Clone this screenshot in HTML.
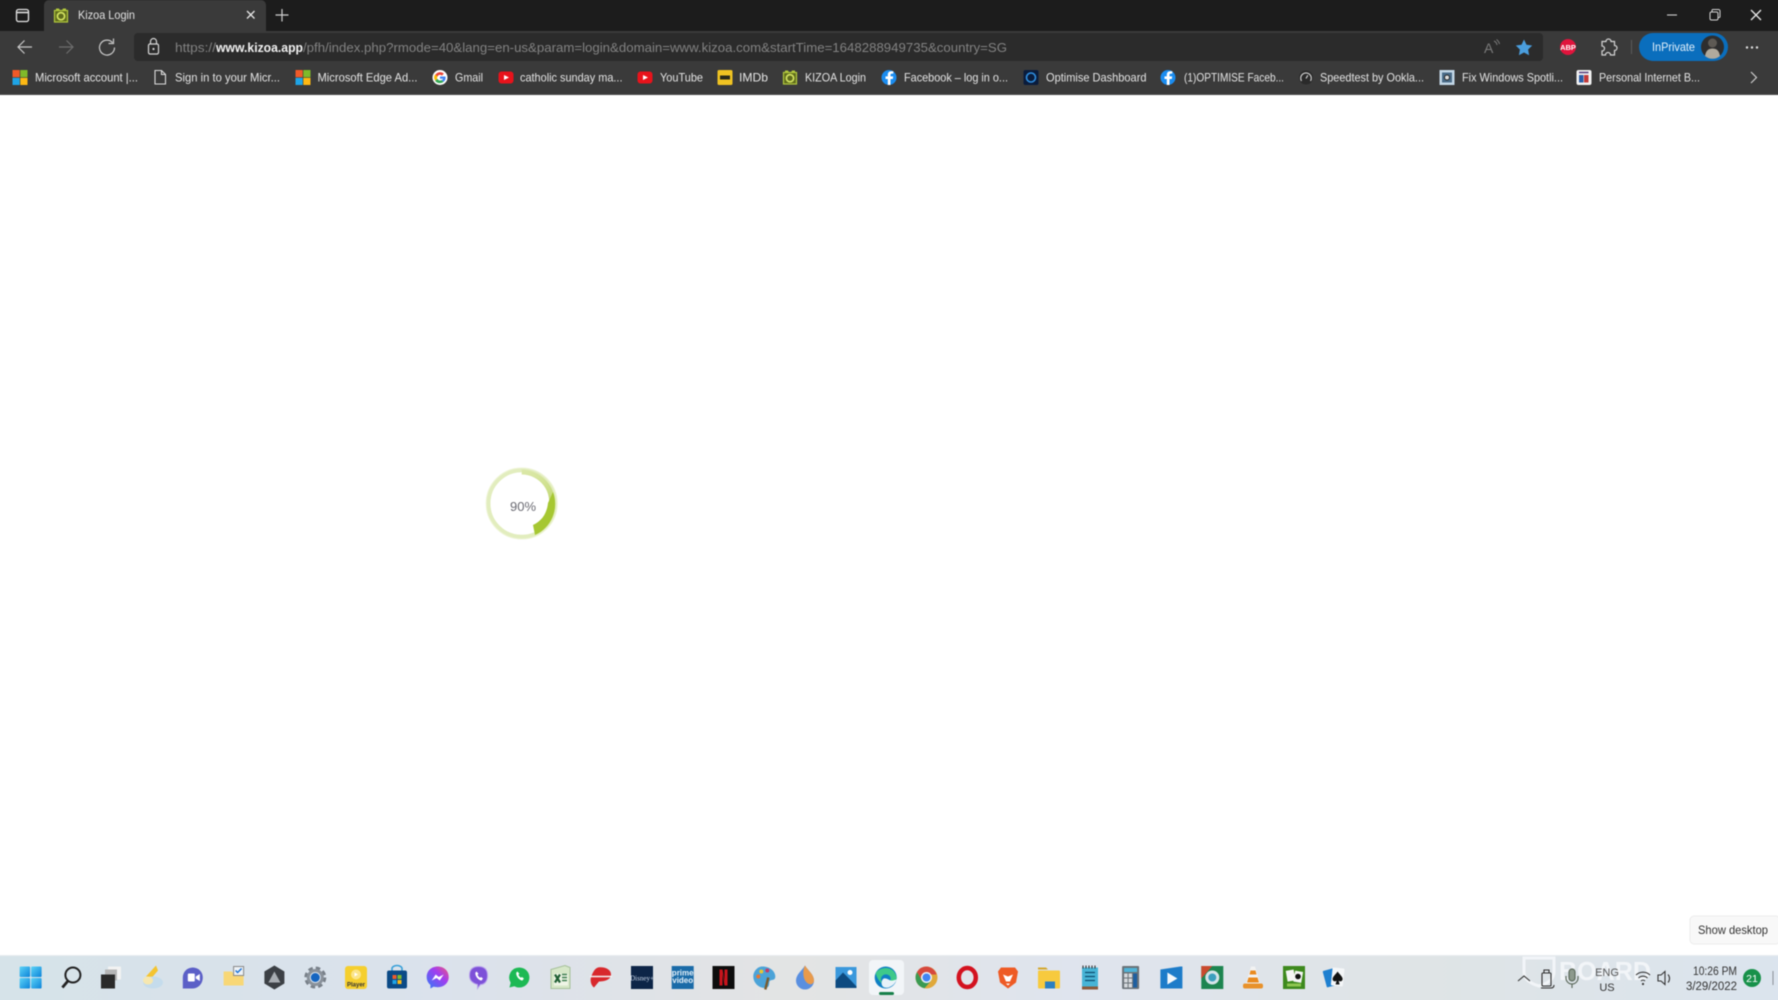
<!DOCTYPE html>
<html><head><meta charset="utf-8"><title>Kizoa Login</title>
<style>
html,body{margin:0;padding:0;background:#fff;width:1778px;height:1000px;overflow:hidden}
#w{position:relative;width:1778px;height:1000px;overflow:hidden;contain:paint}
svg{display:block;position:absolute;left:-6px;top:-6px;font-family:"Liberation Sans",sans-serif;filter:blur(.45px)}
</style></head><body><div id="w">
<svg width="1790" height="1012" viewBox="-6 -6 1790 1012" xmlns="http://www.w3.org/2000/svg">
<defs>
<linearGradient id="tb" x1="0" x2="1" y1="0" y2="0">
<stop offset="0" stop-color="#d6e3e9"/><stop offset=".25" stop-color="#dbe2ec"/><stop offset=".45" stop-color="#e3e4e4"/><stop offset=".6" stop-color="#dfe4ee"/><stop offset=".8" stop-color="#dfe4e6"/><stop offset="1" stop-color="#dbe4ee"/>
</linearGradient>
<linearGradient id="ms" x1="0" x2="1" y1="0" y2="1"><stop offset="0" stop-color="#5cd3f7"/><stop offset="1" stop-color="#0b83d9"/></linearGradient>
<linearGradient id="arc" x1="0" x2="0" y1="0" y2="1"><stop offset="0" stop-color="#dbe8a8"/><stop offset="1" stop-color="#a2c42c"/></linearGradient>
<linearGradient id="msg" x1="0" x2="1" y1="1" y2="0"><stop offset="0" stop-color="#2f7bf6"/><stop offset=".6" stop-color="#a13df0"/><stop offset="1" stop-color="#f0567a"/></linearGradient>
<g id="msl"><rect x="-7.5" y="-7.5" width="7.2" height="7.2" fill="#ef5a29"/><rect x=".3" y="-7.5" width="7.2" height="7.2" fill="#7fba2a"/><rect x="-7.5" y=".3" width="7.2" height="7.2" fill="#1fa4e6"/><rect x=".3" y=".3" width="7.2" height="7.2" fill="#fdb813"/></g>
<g id="yt"><rect x="-7.5" y="-6" width="15" height="12" rx="3" fill="#e8131b"/><path d="M-2-2.5 3 0-2 2.5z" fill="#fff"/></g>
<g id="fb"><circle r="7.5" fill="#1a8cf0"/><path d="M1.5 7.5V1.5h2.3l.4-2.6H1.5v-1.5c0-.8.3-1.3 1.4-1.3h1.4v-2.3C3.9-6.2 3.2-6.3 2.4-6.3-.1-6.300-1.2-4.900-1.200-2.800V-1.100H-3.500V1.500h2.300v6z" fill="#fff"/></g>
<g id="kz"><path d="M-6.500-5h13v11.500h-13z" fill="#5f6c1c"/><path d="M-5-7h3l1 2h-4zM2-7h3v2H1z" fill="#b2c93d"/><circle r="3.600" cy=".7" fill="none" stroke="#d2e260" stroke-width="1.700"/><rect x="-6.500" y="-5" width="13" height="11.500" fill="none" stroke="#b2c93d" stroke-width="1.200"/></g>
</defs>

<!-- page -->
<rect x="-6" y="-6" width="1790" height="1012" fill="#fff"/>

<!-- browser chrome -->
<rect x="-6" y="-6" width="1790" height="37" fill="#1c1c1c"/>
<rect x="-6" y="31" width="1790" height="63.500" fill="#3a3a3a"/>
<rect x="-6" y="94" width="1790" height="1" fill="#4a4a4a"/>
<path d="M44 31V5a5 5 0 0 1 5-5H261a5 5 0 0 1 5 5V31z" fill="#3a3a3a"/>
<rect x="134" y="33" width="1409" height="28" rx="4" fill="#2b2b2b"/>

<!-- tab bar -->
<rect x="16.500" y="9.500" width="12" height="12" rx="2" fill="none" stroke="#e6e6e6" stroke-width="1.300"/><path d="M17 12.500h11" stroke="#e6e6e6" stroke-width="1.500"/>
<use href="#kz" x="61" y="15.500"/>
<text x="78" y="19" font-size="12" fill="#e2e2e2" textLength="57" lengthAdjust="spacingAndGlyphs">Kizoa Login</text>
<path d="M247 11l7.500 7.500M254.500 11l-7.500 7.500" stroke="#e6e6e6" stroke-width="1.300"/>
<path d="M282 9v12.500M275.500 15h13" stroke="#cfcfcf" stroke-width="1.200"/>
<path d="M1667 15h10" stroke="#cfcfcf" stroke-width="1.100"/>
<rect x="1710" y="12" width="8" height="8" rx="1.500" fill="none" stroke="#d5d5d5" stroke-width="1"/><path d="M1712 12v-1.500a1 1 0 0 1 1-1h5.500a1.500 1.500 0 0 1 1.500 1.500v5.500a1 1 0 0 1-1 1h-1.500" fill="none" stroke="#d5d5d5"/>
<path d="M1751 10l10 10M1761 10l-10 10" stroke="#e6e6e6" stroke-width="1.300"/>

<!-- toolbar -->
<path d="M32 47H18M24.500 40.500 18 47l6.500 6.500" fill="none" stroke="#c8c8c8" stroke-width="1.200"/>
<path d="M59 47h14M66.500 40.500 73 47l-6.500 6.500" fill="none" stroke="#6d6d6d" stroke-width="1.200"/>
<path d="M112.500 42.500a7.500 7.500 0 1 0 2 5M113.500 38.500v5h-5" fill="none" stroke="#c8c8c8" stroke-width="1.200"/>
<rect x="148.500" y="44" width="10" height="10" rx="1.500" fill="none" stroke="#d8d8d8" stroke-width="1.200"/><path d="M150.500 44v-2.500a3 3 0 0 1 6 0V44" fill="none" stroke="#d8d8d8" stroke-width="1.200"/><circle cx="153.500" cy="49" r="1.100" fill="#d8d8d8"/>
<text y="52" font-size="13" fill="#828282" x="175" textLength="41" lengthAdjust="spacingAndGlyphs">https://</text>
<text y="52" font-size="13" fill="#f2f2f2" font-weight="bold" x="216" textLength="87" lengthAdjust="spacingAndGlyphs">www.kizoa.app</text>
<text y="52" font-size="13" fill="#828282" x="303" textLength="704" lengthAdjust="spacingAndGlyphs">/pfh/index.php?rmode=40&amp;lang=en-us&amp;param=login&amp;domain=www.kizoa.com&amp;startTime=1648288949735&amp;country=SG</text>
<text x="1484" y="53" font-size="14" fill="#7c7c7c">A</text><path d="M1494 41a5 5 0 0 1 3 4M1496.500 39.500a8 8 0 0 1 3 4.500" fill="none" stroke="#7c7c7c"/>
<path d="M1524 39.500l2.500 5.200 5.700.8-4.100 4 1 5.700-5.100-2.700-5.100 2.700 1-5.700-4.100-4 5.700-.8z" fill="#4a9ede"/>
<circle cx="1568" cy="47" r="8" fill="#e0143c"/><text x="1568" y="50" font-size="7.500" font-weight="bold" fill="#fff" text-anchor="middle">ABP</text>
<path d="M1606 41.500a2.500 2.500 0 0 1 5 0h3.500v4a2.500 2.500 0 0 1 0 5v4.500h-4a2.500 2.500 0 0 0-5 0h-3.500v-4a2.500 2.500 0 0 0 0-5v-4.500z" fill="none" stroke="#d4d4d4" stroke-width="1.200"/>
<path d="M1631.500 40v14" stroke="#5a5a5a"/>
<rect x="1639" y="33" width="89" height="28" rx="14" fill="#0a6ebd"/>
<text x="1652" y="51" font-size="12" fill="#e4f1fb" textLength="43" lengthAdjust="spacingAndGlyphs">InPrivate</text>
<circle cx="1712.500" cy="47" r="11.500" fill="#2e2e2e"/><circle cx="1712.500" cy="43" r="4.500" fill="#5e5a54"/><path d="M1705 56c1-6 4-7.500 7.500-7.500s6.500 1.500 7.500 7.500a11.500 11.500 0 0 1-15 0z" fill="#b0aa9d"/>
<circle cx="1747" cy="47.500" r="1.200" fill="#e0e0e0"/><circle cx="1752" cy="47.500" r="1.200" fill="#e0e0e0"/><circle cx="1757" cy="47.500" r="1.200" fill="#e0e0e0"/>

<!-- bookmarks -->
<g font-size="12" fill="#e4e4e4">
<use href="#msl" x="20" y="77.500"/>
<text x="35" y="81.500" textLength="103" lengthAdjust="spacingAndGlyphs">Microsoft account |...</text>
<path d="M155 70.500h6.500l4 4V84h-10.500zM161.500 70.500v4h4" fill="none" stroke="#dcdcdc" stroke-width="1.100"/>
<text x="175" y="81.500" textLength="105" lengthAdjust="spacingAndGlyphs">Sign in to your Micr...</text>
<use href="#msl" x="303" y="77.500"/>
<text x="317.500" y="81.500" textLength="100" lengthAdjust="spacingAndGlyphs">Microsoft Edge Ad...</text>
<circle cx="440" cy="77.500" r="7.500" fill="#fff"/>
<path d="M440 74.800a2.800 2.800 0 0 1 1.900.8l2-2a5.600 5.600 0 0 0-8.800 1.600l2.300 1.800a3 3 0 0 1 2.600-2.200z" fill="#ea4335"/><path d="M437 77.500a3 3 0 0 1 .4-1.300l-2.300-1.800a5.600 5.600 0 0 0 0 6.200l2.300-1.800a3 3 0 0 1-.4-1.300z" fill="#fbbc05"/><path d="M440 83.100a5.500 5.500 0 0 0 3.700-1.300l-2.200-1.700a3 3 0 0 1-4.100-1.200l-2.300 1.800a5.600 5.600 0 0 0 4.900 2.400z" fill="#34a853"/><path d="M445.500 76.500H440v2.200h3.100a2.700 2.700 0 0 1-1.600 1.500l2.200 1.600a5.600 5.600 0 0 0 1.800-5.300z" fill="#4285f4"/>
<text x="455" y="81.500" textLength="28" lengthAdjust="spacingAndGlyphs">Gmail</text>
<use href="#yt" x="506" y="77.500"/>
<text x="520" y="81.500" textLength="102.500" lengthAdjust="spacingAndGlyphs">catholic sunday ma...</text>
<use href="#yt" x="645" y="77.500"/>
<text x="660" y="81.500" textLength="43" lengthAdjust="spacingAndGlyphs">YouTube</text>
<rect x="717.500" y="70" width="15" height="15" rx="1.500" fill="#f0c322"/><rect x="720" y="75.500" width="10" height="4" fill="#2a2a1a"/>
<text x="739" y="81.500" textLength="29" lengthAdjust="spacingAndGlyphs">IMDb</text>
<use href="#kz" x="790" y="77.500"/>
<text x="805" y="81.500" textLength="61" lengthAdjust="spacingAndGlyphs">KIZOA Login</text>
<use href="#fb" x="889" y="77.500"/>
<text x="904" y="81.500" textLength="104" lengthAdjust="spacingAndGlyphs">Facebook – log in o...</text>
<rect x="1023.500" y="70" width="15" height="15" rx="2" fill="#0a1c3c"/><circle cx="1031" cy="77.500" r="4.500" fill="none" stroke="#2f8fe0" stroke-width="1.600"/>
<text x="1046" y="81.500" textLength="100.500" lengthAdjust="spacingAndGlyphs">Optimise Dashboard</text>
<use href="#fb" x="1168" y="77.500"/>
<text x="1184" y="81.500" textLength="100" lengthAdjust="spacingAndGlyphs">(1)OPTIMISE Faceb...</text>
<circle cx="1306" cy="77.500" r="7" fill="#2a2a2a"/><path d="M1301.500 81a5.300 5.300 0 1 1 9 0M1306 78.500l1.800-3.200" fill="none" stroke="#d8d8d8" stroke-width="1.100"/>
<text x="1320" y="81.500" textLength="104" lengthAdjust="spacingAndGlyphs">Speedtest by Ookla...</text>
<rect x="1439.500" y="70" width="15" height="15" fill="#c2d6e6"/><rect x="1442" y="72.500" width="10" height="10" fill="#4a6b88"/><circle cx="1447" cy="77.500" r="2.500" fill="#ddd" stroke="#222"/>
<text x="1462" y="81.500" textLength="101" lengthAdjust="spacingAndGlyphs">Fix Windows Spotli...</text>
<rect x="1576.500" y="70" width="15" height="15" rx="2" fill="#f2f2f2"/><rect x="1579" y="75" width="4.500" height="7.500" fill="#2a5da8"/><rect x="1584" y="75" width="4.500" height="7.500" fill="#c23a3a"/><path d="M1579 72.500h9.500" stroke="#553a7a" stroke-width="1.500"/>
<text x="1599" y="81.500" textLength="101" lengthAdjust="spacingAndGlyphs">Personal Internet B...</text>
<path d="M1751 72l5.500 5.500-5.500 5.500" fill="none" stroke="#cfcfcf" stroke-width="1.200"/>
</g>

<!-- spinner -->
<circle cx="521.700" cy="503.500" r="33.500" fill="none" stroke="#e2edbe" stroke-width="4.500"/>
<circle cx="521.700" cy="503.500" r="35.500" fill="none" stroke="#eef4d6" stroke-width="1"/>
<path d="M521.700 469.500 A34 34 0 0 1 535 534.500 L536 528.500 A27 27 0 0 0 548 510 A27.500 27.500 0 0 0 521.700 474.500z" fill="url(#arc)" opacity=".95"/>
<path d="M553 492 A34 34 0 0 1 535 535 L533 525 C542 521 547 513 548 503z" fill="#a6c732"/>
<text x="523" y="511" font-size="13" fill="#6a6a72" text-anchor="middle">90%</text>

<!-- show desktop tooltip -->
<rect x="1690" y="916" width="90" height="28" rx="4" fill="#f8f8f8" stroke="#ececec"/>
<text x="1698" y="934" font-size="12" fill="#333" textLength="70" lengthAdjust="spacingAndGlyphs">Show desktop</text>

<!-- taskbar -->
<rect x="-6" y="955" width="1790" height="51" fill="url(#tb)"/>
<rect x="-6" y="955" width="1790" height="1" fill="#e8ecef"/>
<text x="1559" y="980" font-size="26" font-weight="bold" fill="#f2f5f8" textLength="92" lengthAdjust="spacingAndGlyphs">BOARD</text>
<path d="M1524 958h30v14c0 8-8 12-15 14-7-2-15-6-15-14z" fill="none" stroke="#f2f5f8" stroke-width="3"/>

<!-- start -->
<g transform="translate(30.600 977.500)"><rect x="-11" y="-11" width="10.500" height="10.500" rx="1" fill="url(#ms)"/><rect x=".5" y="-11" width="10.500" height="10.500" rx="1" fill="url(#ms)"/><rect x="-11" y=".5" width="10.500" height="10.500" rx="1" fill="url(#ms)"/><rect x=".5" y=".5" width="10.500" height="10.500" rx="1" fill="url(#ms)"/></g>
<!-- search -->
<g transform="translate(71.400 977.500)" fill="none" stroke="#222"><circle cx="1.500" cy="-2.500" r="7.500" stroke-width="2"/><path d="M-3.500 3.500-9 10" stroke-width="2.800"/></g>
<!-- task view -->
<g transform="translate(110 977.500)"><rect x="-2" y="-11" width="13" height="13" rx="1" fill="#f2f2f2"/><rect x="-5" y="-8" width="12" height="11" fill="#b5b5b5"/><rect x="-9" y="-3" width="14" height="14" fill="#2a2a2a"/></g>
<!-- weather -->
<g transform="translate(152 977.500)"><path d="M4-12-6-1 0 0 6-7z" fill="#f4c430"/><ellipse cx="1" cy="5" rx="10" ry="6" fill="#c5dcec"/><ellipse cx="-4" cy="3" rx="5" ry="4" fill="#f6e7b0"/></g>
<!-- teams -->
<g transform="translate(192.800 977.500)"><path d="M-10 0a10 10 0 0 1 20 0 10 11 0 0 1-10 11h-10z" fill="#5b5fc7"/><rect x="-5" y="-4" width="7" height="8" rx="1" fill="#fff"/><path d="M3-1 7-3.500V3.500L3 1z" fill="#fff"/></g>
<!-- files -->
<g transform="translate(233.600 977.500)"><path d="M-10-6h8l2 2h10V8h-20z" fill="#f8d776"/><rect x="0" y="-11" width="10" height="9" fill="#eef2f6" stroke="#888"/><path d="M2-7l2 2 4-4" stroke="#1a73d9" stroke-width="1.500" fill="none"/></g>
<!-- hex -->
<g transform="translate(274.400 977.500)"><path d="M0-12 10-6V6L0 12-10 6V-6z" fill="#3c4045"/><path d="M0-6 6 5H-6z" fill="#a8adb2"/></g>
<!-- settings -->
<g transform="translate(315.300 977.500)"><circle r="8.500" fill="none" stroke="#788089" stroke-width="5" stroke-dasharray="4 2.700"/><circle r="7" fill="none" stroke="#8a929b" stroke-width="3"/><circle r="4.500" fill="#1565c0"/></g>
<!-- player -->
<g transform="translate(356 977.500)"><rect x="-11" y="-11.500" width="22" height="23" rx="3" fill="#f5cf2e"/><circle cy="-3" r="5" fill="#fbe58a"/><path d="M-1.500-5 2-3-1.500-1z" fill="#fff"/><text y="9" font-size="6" font-weight="bold" text-anchor="middle" fill="#333">Player</text></g>
<!-- store -->
<g transform="translate(397 977.500)"><rect x="-10" y="-7" width="20" height="18" rx="2" fill="#0b4a86"/><path d="M-5-7v-2a5 3 0 0 1 10 0v2" fill="none" stroke="#38a0d8" stroke-width="1.600"/><rect x="-4.500" y="-2.500" width="4" height="4" fill="#ef5a29"/><rect x=".5" y="-2.500" width="4" height="4" fill="#7fba2a"/><rect x="-4.500" y="2.500" width="4" height="4" fill="#1fa4e6"/><rect x=".5" y="2.500" width="4" height="4" fill="#fdb813"/></g>
<!-- messenger -->
<g transform="translate(437.700 977.500)"><path d="M0-11C-6.500-11-11-6.500-11-.5c0 3.300 1.400 6 3.700 7.900V11l3.300-1.900c1.200.4 2.600.6 4 .6C6.500 9.700 11 5.300 11-.5 11-6.500 6.500-11 0-11z" fill="url(#msg)"/><path d="M-6 3-2-3 1-.5 6-3 2 3-1 .5z" fill="#fff"/></g>
<!-- viber -->
<g transform="translate(478.500 977.500)"><path d="M0-11c6 0 9 3 9 9s-3 9-7 9l-3 4V7c-4-1-8-3-8-9s3-9 9-9z" fill="#7d51d8" stroke="#b9a3ec"/><path d="M-3-5c-1 3 3 8 6 8l1.500-2-2-1.500-1 .8c-1-.5-2-1.800-2.500-3l1-1L-2-6z" fill="#fff"/></g>
<!-- whatsapp -->
<g transform="translate(519.400 977.500)"><path d="M0-10a10 10 0 0 1 0 20c-2 0-3.500-.5-5-1.300L-10 10l1.300-4.700A10 10 0 0 1 0-10z" fill="#1db954"/><path d="M-3-5c-1 3 3 8 6 8l1.500-2-2-1.500-1 .8c-1-.5-2-1.800-2.500-3l1-1L-2-6z" fill="#fff"/></g>
<!-- excel-like -->
<g transform="translate(560 977.500)"><path d="M-9-8 5-12 10-10V11H-9z" fill="#d6e7c8" stroke="#a6c09a"/><rect x="-6" y="-4" width="14" height="12" fill="#eef5e6"/><path d="M-5-3 0 5M0-3-5 5" stroke="#1f5f33" stroke-width="2.200"/><path d="M2-3h5M2 0h5M2 3h5" stroke="#3d7d4f" stroke-width="1.500"/></g>
<!-- red -->
<g transform="translate(601 977.500)"><path d="M-3-10C4-11 10-8 10-3 10 2 4 4-2 4L-7 10C-10 8-11 3-10 0-8-6-6-9-3-10z" fill="#d8282c"/><path d="M-11-1 11-1" stroke="#f4f4f4" stroke-width="1.500"/></g>
<!-- disney -->
<g transform="translate(642 977.500)"><rect x="-11" y="-11.500" width="22" height="23" fill="#0d2547"/><text y="3" font-size="7" font-family="Liberation Serif" text-anchor="middle" fill="#c9d7ea">Disney+</text></g>
<!-- prime -->
<g transform="translate(682.700 977.500)"><rect x="-11" y="-11.500" width="22" height="23" fill="#1a6ba8"/><text y="-2" font-size="8" font-weight="bold" text-anchor="middle" fill="#e7f2fa">prime</text><text y="5.500" font-size="8" font-weight="bold" text-anchor="middle" fill="#e7f2fa">video</text></g>
<!-- netflix -->
<g transform="translate(723.500 977.500)"><rect x="-11" y="-11.500" width="22" height="23" fill="#0d0d0d"/><path d="M-4-8h3L1 4V-8h3V8H1L-1-4V8h-3z" fill="#c9141c"/></g>
<!-- paint -->
<g transform="translate(764.300 977.500)"><path d="M-2-11C6-11 11-6 11-1 11 3 8 2 6 3 4 4 6 8 3 10-4 12-11 6-11-1-11-6-7-11-2-11z" fill="#4ba3d8"/><circle cx="-6" cy="-1" r="2" fill="#e9752e"/><circle cx="-3" cy="-6" r="2" fill="#e8c532"/><circle cx="3" cy="-7" r="2" fill="#c03d6b"/><path d="M4 0 1 12" stroke="#7a5c2e" stroke-width="2.500"/></g>
<!-- drop -->
<g transform="translate(805 977.500)"><path d="M0-12C3-7 9-3 9 3A9 9 0 0 1-9 3C-9-3-3-7 0-12z" fill="#5a8fe0"/><path d="M0-12C3-7 9-3 9 3 9 6 6 8 3 6-2 3-3-6 0-12z" fill="#e89a4c"/></g>
<!-- photos -->
<g transform="translate(846 977.500)"><rect x="-10.500" y="-10.500" width="21" height="21" fill="#3a98dc"/><path d="M-10.500 10.500V3L-3-5 4 2 10.500 9v1.500z" fill="#0d4a80"/><circle cx="4" cy="-5" r="2.500" fill="#fff"/></g>
<!-- edge selected -->
<rect x="869" y="960" width="35" height="35" rx="4" fill="#f2f5f8"/>
<rect x="879" y="992" width="15" height="3" rx="1.500" fill="#17804a"/>
<g transform="translate(885.700 977.500)"><circle r="11" fill="#0f7fc4"/><path d="M-10-4C-8-10 8-14 11 0 11 3 8 5 4 4 7 0 3-4-1-3-5-2-6 3-3 6-6 5-9 0-10-4z" fill="#3ec98a"/><path d="M-2 1C2 0 4 4 7 3L11 2C9 8 3 11-1 10-5 9-5 3-2 1z" fill="#fff" opacity=".9"/></g>
<!-- chrome -->
<g transform="translate(926.500 977.500)"><circle r="11" fill="#e0a83a"/><path d="M0-11A11 11 0 0 0-9.500-5.500L-4 4-2-3H10A11 11 0 0 0 0-11z" fill="#d6483d"/><path d="M-9.500-5.500A11 11 0 0 0-2 10.800L4 4-4 4z" fill="#3a9a52"/><circle r="5.500" fill="#eaf1f8"/><circle r="4" fill="#4285f4"/></g>
<!-- opera -->
<g transform="translate(967.300 977.500)" fill="none"><ellipse rx="8.500" ry="9.500" stroke="#d3121f" stroke-width="4.500"/></g>
<!-- brave -->
<g transform="translate(1008 977.500)"><path d="M-7-10H7L10-6 8 5 0 11-8 5-10-6z" fill="#ee5a24"/><path d="M-5-3 0-1 5-3 2 4H-2z" fill="#fff"/><path d="M-2 6H2L0 8z" fill="#fff"/></g>
<!-- explorer -->
<g transform="translate(1049 977.500)"><path d="M-11-10h8l2 2h-10z" fill="#d4a72c"/><rect x="-11" y="-7" width="22" height="18" rx="1" fill="#f7ca3e"/><rect x="-4" y="4" width="10" height="7" fill="#2a7fc1"/></g>
<!-- notepad -->
<g transform="translate(1090 977.500)"><rect x="-8" y="-10" width="16" height="20" fill="#47b4d6"/><path d="M-5-5H5M-5-1H5M-5 3H5" stroke="#0d4d70" stroke-width="1.300"/><path d="M-7-12v3M-4-12v3M-1-12v3M2-12v3M5-12v3" stroke="#333" stroke-width="1.100"/><rect x="-8" y="9" width="16" height="3" fill="#8a5a3c"/></g>
<!-- calc -->
<g transform="translate(1130.600 977.500)"><rect x="-8.500" y="-11.500" width="17" height="23" rx="1" fill="#6a7278"/><rect x="-6.500" y="-9.500" width="13" height="4" fill="#4fb3d8"/><g fill="#d6dade"><rect x="-6.500" y="-4" width="3.500" height="4"/><rect x="-2" y="-4" width="3.500" height="4"/><rect x="-6.500" y="1" width="3.500" height="4"/><rect x="-2" y="1" width="3.500" height="4"/><rect x="-6.500" y="6" width="3.500" height="4"/><rect x="-2" y="6" width="3.500" height="4"/></g><rect x="2.500" y="-4" width="4" height="14" fill="#1e5fa0"/></g>
<!-- movies -->
<g transform="translate(1171.400 977.500)"><path d="M-11-8 9-11 11-11V11H-11z" fill="#1d7cc9"/><path d="M-4-5 6 1-4 7z" fill="#f4f8fb"/></g>
<!-- green tile -->
<g transform="translate(1212.300 977.500)"><rect x="-11" y="-11.500" width="22" height="23" fill="#1d8550"/><path d="M-11-11.500H0L-11 1z" fill="#c94a2e"/><circle r="7" fill="#d6e4e8"/><circle r="4" fill="#3d9fbe"/></g>
<!-- vlc -->
<g transform="translate(1253 977.500)"><path d="M-2-11H2L7 6H-7z" fill="#f2f2f2"/><path d="M-2.500-7H2.500L3.500-3H-3.500zM-4.500 0H4.500L6 5H-6z" fill="#e98a1e"/><rect x="-10" y="6" width="20" height="5" rx="2" fill="#e8912a"/></g>
<!-- cards green -->
<g transform="translate(1294 977.500)"><rect x="-11" y="-11.500" width="22" height="23" fill="#3e8a1e"/><rect x="-7" y="-8" width="8" height="11" fill="#f5f5f5" transform="rotate(-10)"/><rect x="0" y="-7" width="8" height="11" fill="#f5f5f5" transform="rotate(10)"/><circle cx="4" cy="-1" r="2.800" fill="#111"/><rect x="-7" y="6" width="14" height="3" fill="#8fc750"/></g>
<!-- solitaire -->
<g transform="translate(1333.600 977.500)"><rect x="-9" y="-9" width="11" height="17" rx="1" fill="#1d7fd0" transform="rotate(-15)"/><rect x="-2" y="-10" width="12" height="18" rx="1" fill="#f4f6f8" transform="rotate(6)"/><path d="M4-6C6-3 9-1 9 1.500 9 4 6 4.500 5 3L6 7H2L3 3C2 4.500-1 4-1 1.500-1-1 2-3 4-6z" fill="#111"/></g>

<!-- tray -->
<path d="M1518 981l6-5 6 5" fill="none" stroke="#333" stroke-width="1.100"/>
<g fill="none" stroke="#2f2f2f" stroke-width="1.100"><rect x="1542" y="973" width="9" height="13" rx="1"/><path d="M1544 973v-3h5v3M1541 988h10c2 0 3-1 3-3"/></g>
<g fill="none" stroke="#5d6b5d" stroke-width="1.200"><rect x="1569" y="969" width="6" height="12" rx="3" fill="#8d9a8d"/><path d="M1566 976v2a6 6 0 0 0 12 0v-2M1572 984v4"/></g>
<text x="1607" y="976" font-size="11" fill="#555" text-anchor="middle">ENG</text>
<text x="1607" y="991" font-size="11" fill="#333" text-anchor="middle">US</text>
<g fill="none" stroke="#333" stroke-width="1.100"><path d="M1636 975a10 10 0 0 1 14 0M1638.500 978a6.500 6.500 0 0 1 9 0M1641 981a3 3 0 0 1 4 0"/></g><circle cx="1643" cy="984" r="1.100" fill="#333"/>
<path d="M1658 975h3l4-3.500v13l-4-3.500h-3zM1668 974.500a6 6 0 0 1 0 8" fill="none" stroke="#333" stroke-width="1.100"/>
<text x="1693" y="975" font-size="11.500" fill="#333" textLength="44" lengthAdjust="spacingAndGlyphs">10:26 PM</text>
<text x="1686" y="990" font-size="11.500" fill="#333" textLength="51" lengthAdjust="spacingAndGlyphs">3/29/2022</text>
<circle cx="1752" cy="978" r="9" fill="#17914a"/><text x="1752" y="982" font-size="10.500" fill="#fff" text-anchor="middle">21</text>
<path d="M1773 971v14" stroke="#8a8f96"/>
</svg>
</div></body></html>
